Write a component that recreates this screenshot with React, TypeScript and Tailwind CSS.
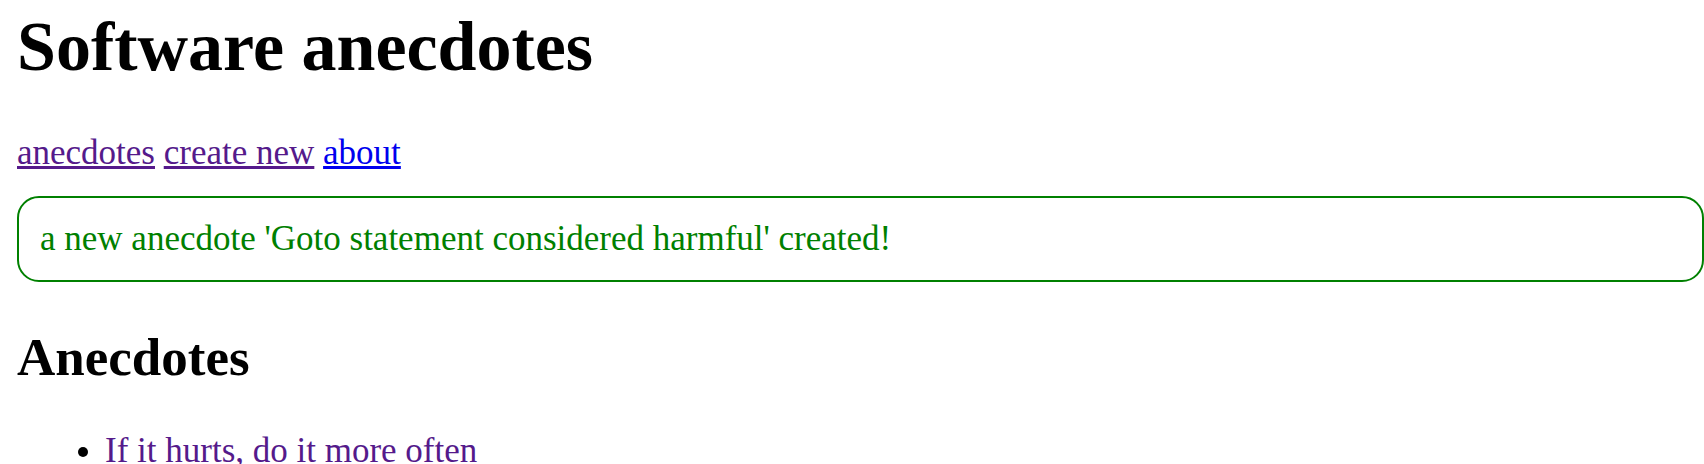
import React from "react";

const anecdotes = [{ id: 1, content: "If it hurts, do it more often" }];

export default function App() {
  const notification = "a new anecdote 'Goto statement considered harmful' created!";

  return (
    <div className="min-h-screen bg-white pl-[17px] pr-0 font-['Liberation_Serif','Times_New_Roman',serif] text-black">
      <h1 className="mt-[7px] text-[70px] leading-[80px] font-bold">Software anecdotes</h1>

      {/* Menu */}
      <div className="mt-[46px] text-[35px] leading-[40px]">
        <a href="#" className="text-[#551a8b] underline">anecdotes</a>{" "}
        <a href="#" className="text-[#551a8b] underline">create new</a>{" "}
        <a href="#" className="text-[#0000ee] underline">about</a>
      </div>

      {/* Notification */}
      <div className="mt-[23px] rounded-[22px] border-2 border-[#008000] px-[21px] py-[21px] text-[35px] leading-[40px] text-[#008000]">
        {notification}
      </div>

      <h2 className="mt-[45px] text-[53px] leading-[60px] font-bold">Anecdotes</h2>

      <ul className="mt-[44px] list-disc pl-[88px] text-[35px] leading-[40px]">
        {anecdotes.map((a) => (
          <li key={a.id}>
            <a href="#" className="text-[#551a8b] underline underline-offset-[5px]">{a.content}</a>
          </li>
        ))}
      </ul>
    </div>
  );
}
